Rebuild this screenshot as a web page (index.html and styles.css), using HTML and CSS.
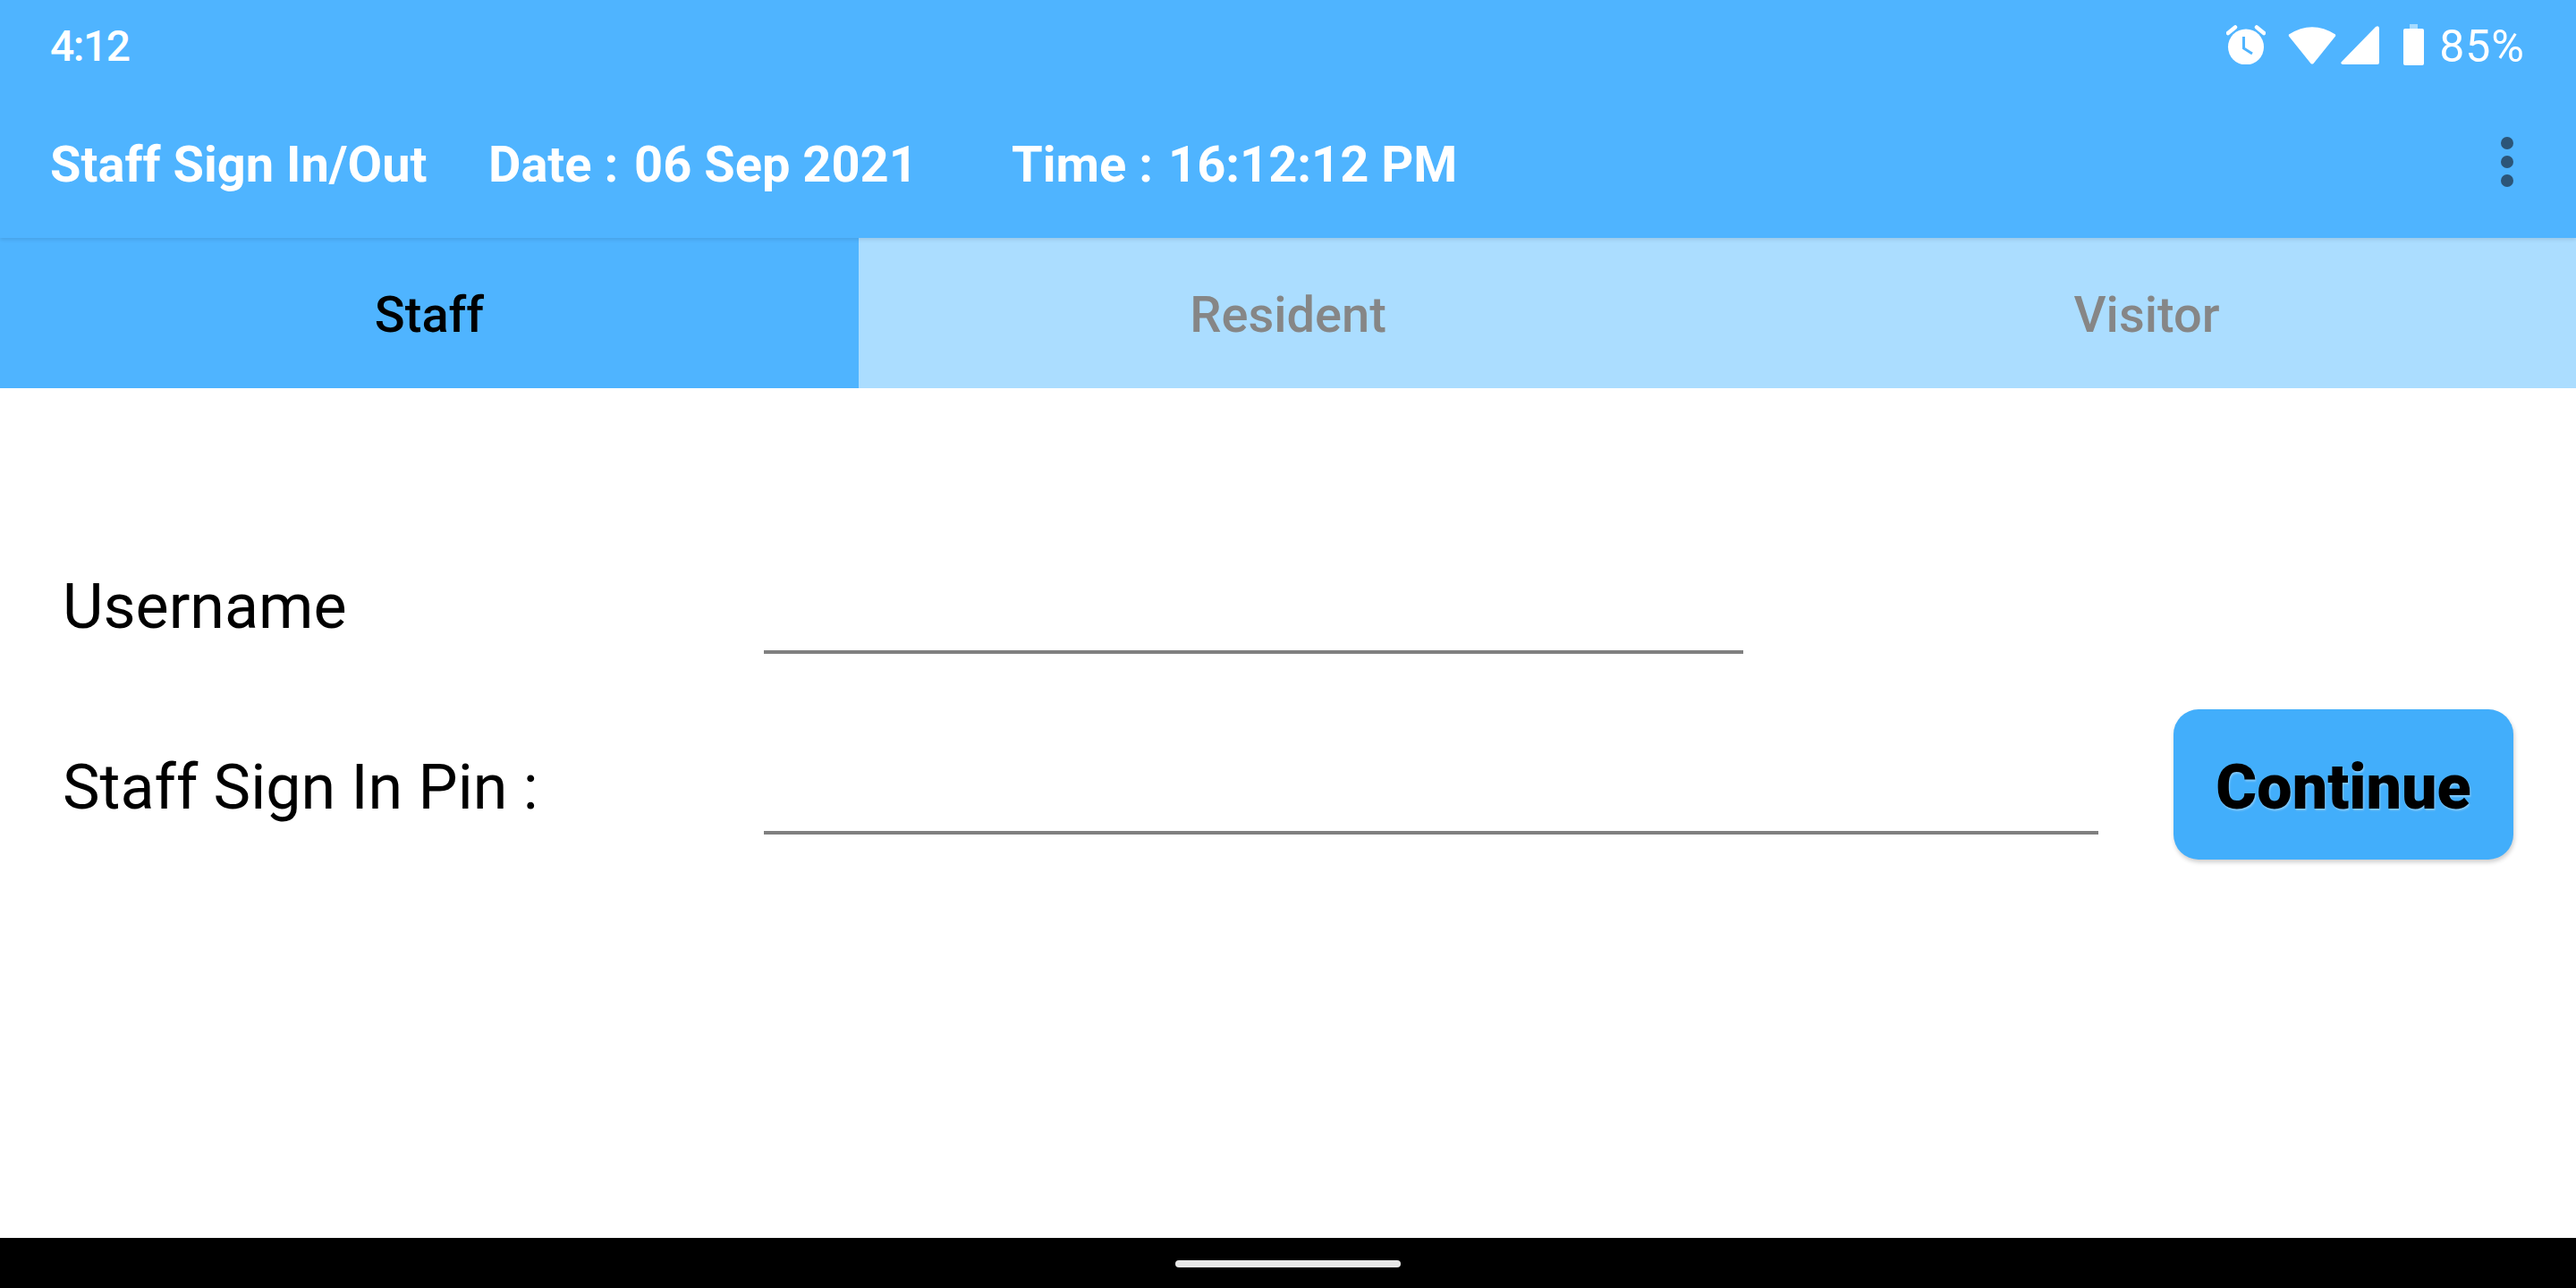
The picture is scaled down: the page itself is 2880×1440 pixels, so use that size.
FILE: index.html
```html
<!DOCTYPE html>
<html lang="en">

<head>
    <meta charset="UTF-8">
    <title>Staff Sign In/Out</title>
    <link rel="stylesheet" href="styles.css">
</head>

<body>
    <div class="screen">
        <header class="app-header">
            <div class="status-bar">
                <span class="clock">4:12</span>
                <div class="status-icons">
                    <svg class="icon-alarm" viewBox="0 0 44 44">
                        <circle cx="22" cy="24.5" r="20" fill="#fff"></circle>
                        <path d="M2 9 L10 2.5 M42 9 L34 2.5" stroke="#fff" stroke-width="4.5" stroke-linecap="round"></path>
                        <path d="M19.5 13 V26 L29 32" fill="none" stroke="#4fb4ff" stroke-width="3"></path>
                    </svg>
                    <svg class="icon-wifi" viewBox="0 0 54 43">
                        <path d="M1 9.5 Q27 -7 53 9.5 Q53.500 11 53 11.500 L28.500 42 Q27 43 25.500 42 L1 11.500 Q0.500 10.500 1 9.500 Z" fill="#fff"></path>
                    </svg>
                    <svg class="icon-signal" viewBox="0 0 43 43">
                        <path d="M39 1 Q43 -1 43 3 V41 Q43 43 41 43 H2 Q-1 42 1 40 Z" fill="#fff"></path>
                    </svg>
                    <svg class="icon-battery" viewBox="0 0 23 46">
                        <rect x="7" y="0" width="9" height="6" fill="#a6dbff"></rect>
                        <rect x="0" y="5" width="23" height="41" rx="2" fill="#fff"></rect>
                    </svg>
                    <span class="battery-text">85%</span>
                </div>
            </div>
            <div class="toolbar">
                <span class="toolbar-title">Staff Sign In/Out</span>
                <span class="toolbar-date">Date :</span>
                <span class="toolbar-date-value">06 Sep 2021</span>
                <span class="toolbar-time">Time :</span>
                <span class="toolbar-time-value">16:12:12 PM</span>
                <div class="overflow-menu">
                    <span class="dot"></span>
                    <span class="dot"></span>
                    <span class="dot"></span>
                </div>
            </div>
        </header>

        <nav class="tabs">
            <div class="tab active">Staff</div>
            <div class="tab">Resident</div>
            <div class="tab">Visitor</div>
        </nav>

        <main class="content">
            <div class="form-row username-row">
                <label class="field-label" for="username">Username</label>
                <input id="username" class="field-input username-input" type="text">
            </div>
            <div class="form-row pin-row">
                <label class="field-label" for="pin">Staff Sign In Pin :</label>
                <input id="pin" class="field-input pin-input" type="password">
                <button class="continue-button" type="button">Continue</button>
            </div>
        </main>

        <footer class="nav-bar">
            <div class="home-handle"></div>
        </footer>
    </div>
</body>

</html>
```

FILE: styles.css
```css
* {
    box-sizing: border-box;
}

body {
    margin: 0;
    padding: 0;
    background-color: #fff;
    font-family: Roboto, sans-serif;
}

.screen {
    display: flex;
    flex-direction: column;
    width: 2880px;
    height: 1440px;
    overflow: hidden;
}

.app-header {
    position: relative;
    height: 266px;
    background-color: #4fb4ff;
    box-shadow: 0 2px 4px rgba(0, 0, 0, 0.1);
    color: #fff;
}

.status-bar {
    display: flex;
    justify-content: space-between;
    align-items: center;
    height: 100px;
    padding: 0 57px 0 56px;
}

.clock {
    margin-top: 3px;
    font-size: 48px;
    font-weight: 500;
    letter-spacing: -1.500px;
}

.status-icons {
    display: flex;
    align-items: center;
}

.status-icons svg {
    display: block;
}

.icon-alarm {
    width: 44px;
    height: 44px;
    margin-right: 25px;
}

.icon-wifi {
    width: 54px;
    height: 43px;
    margin-right: 5px;
}

.icon-signal {
    width: 43px;
    height: 43px;
    margin-right: 27px;
}

.icon-battery {
    width: 23px;
    height: 46px;
    margin-right: 17px;
}

.battery-text {
    margin-top: 3px;
    font-size: 50px;
    letter-spacing: 1px;
}

.toolbar {
    display: flex;
    align-items: center;
    height: 166px;
    padding: 2px 70px 0 56px;
    font-size: 56px;
    font-weight: 700;
}

.toolbar-title {
    width: 490px;
}

.toolbar-date {
    width: 163px;
}

.toolbar-date-value {
    width: 422px;
}

.toolbar-time {
    width: 175px;
}

.overflow-menu {
    display: flex;
    flex-direction: column;
    gap: 7px;
    margin-left: auto;
    margin-bottom: 6px;
}

.dot {
    width: 14px;
    height: 14px;
    border-radius: 50%;
    background-color: #2c5578;
}

.tabs {
    display: flex;
    height: 168px;
    background-color: #abddff;
}

.tab {
    display: flex;
    flex: 1;
    justify-content: center;
    align-items: center;
    padding-top: 4px;
    font-size: 56px;
    font-weight: 500;
    color: #868686;
}

.tab.active {
    background-color: #4fb4ff;
    color: #000;
}

.content {
    flex: 1;
    padding: 0 70px;
}

.form-row {
    display: flex;
    align-items: center;
}

.username-row {
    height: 100px;
    margin-top: 196px;
}

.pin-row {
    height: 168px;
    margin-top: 63px;
}

.field-label {
    flex: none;
    width: 784px;
    font-size: 70px;
    color: #000;
}

.username-row .field-label {
    margin-bottom: 4px;
}

.pin-row .field-label {
    margin-top: 5px;
}

.field-input {
    flex: none;
    height: 60px;
    border: none;
    border-bottom: 4px solid #808080;
    outline: none;
    background: transparent;
}

.username-input {
    width: 1095px;
    margin-top: 42px;
}

.pin-input {
    width: 1492px;
    margin-top: 52px;
}

.continue-button {
    flex: none;
    width: 380px;
    height: 168px;
    margin-left: 84px;
    padding: 5px 0 0;
    border: none;
    border-radius: 28px;
    background-color: #42aefb;
    box-shadow: 1px 3px 5px rgba(0, 0, 0, 0.2);
    color: #000;
    font-family: Roboto, sans-serif;
    font-size: 70px;
    font-weight: 900;
    text-shadow: 1px 2px 2px rgba(255, 255, 255, 0.35);
}

.nav-bar {
    display: flex;
    justify-content: center;
    align-items: center;
    height: 56px;
    background-color: #000;
}

.home-handle {
    width: 252px;
    height: 8px;
    margin-top: 1px;
    border-radius: 4px;
    background-color: #e8e8e8;
}
```
